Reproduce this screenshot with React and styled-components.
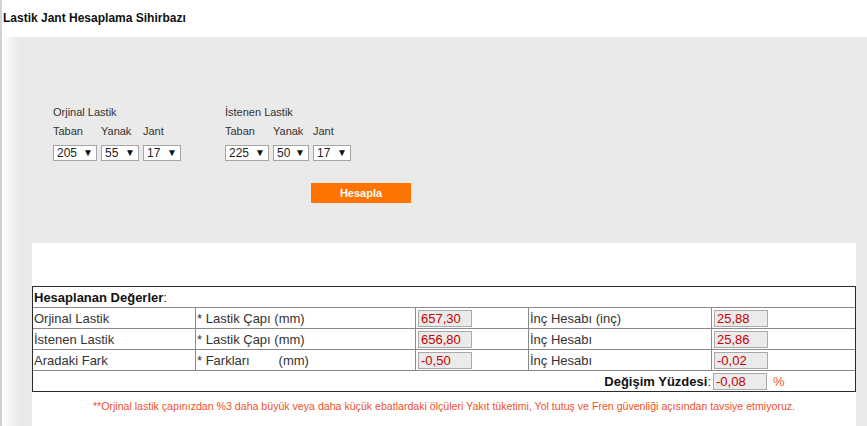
import React from "react";
import styled, { createGlobalStyle } from "styled-components";

const GlobalStyle = createGlobalStyle`
  html, body {
    margin: 0;
    padding: 0;
    background: #ffffff;
    overflow: hidden;
  }
  body {
    font-family: "Liberation Sans", Arial, sans-serif;
    color: #222;
  }
`;

const Frame = styled.div`
  display: flex;
  min-height: 100vh;
`;

const LeftRule = styled.div`
  width: 2px;
  background: #d2d2d2;
`;

const Main = styled.div`
  flex: 1;
  display: flex;
  flex-direction: column;
`;

const Title = styled.h1`
  margin: 0;
  height: 37px;
  box-sizing: border-box;
  padding: 11px 0 0 1px;
  font-size: 12px;
  line-height: 14px;
  font-weight: bold;
  color: #111;
`;

const Panel = styled.div`
  flex: 1;
  display: flex;
  flex-direction: column;
  background: linear-gradient(to right, #ffffff 0, #f1f1f1 10px, #eaeaea 18px);
`;

const Form = styled.div`
  padding: 69px 0 40px 51px;
  display: flex;
  flex-direction: column;
`;

const Groups = styled.div`
  display: flex;
  gap: 44px;
`;

const Group = styled.div`
  display: flex;
  flex-direction: column;
`;

const GroupTitle = styled.div`
  font-size: 11px;
  line-height: 13px;
  color: #333;
  margin-bottom: 6px;
`;

const FieldGrid = styled.div`
  display: grid;
  grid-template-columns: ${({ cols }) => cols};
  column-gap: ${({ gap }) => gap}px;
  row-gap: 7px;
`;

const FieldLabel = styled.div`
  font-size: 11px;
  line-height: 13px;
  color: #333;
`;

const SelectBox = styled.div`
  height: 16px;
  box-sizing: border-box;
  border: 1px solid #a5a5a5;
  background: #fff;
  display: flex;
  align-items: center;
  justify-content: space-between;
  padding: 0 3px 0 3px;
  font-size: 12px;
  color: #222;
`;

const Arrow = styled.span`
  font-size: 10px;
  line-height: 10px;
  color: #111;
`;

const Button = styled.button`
  margin: 22px 0 0 258px;
  width: 100px;
  height: 20px;
  border: none;
  background: #ff7300;
  color: #fff;
  font-family: "Liberation Sans", Arial, sans-serif;
  font-size: 11px;
  font-weight: bold;
  padding: 0;
`;

const Card = styled.div`
  flex: 1;
  margin: 0 11px 0 30px;
  background: #ffffff;
  padding-top: 43px;
`;

const Table = styled.table`
  width: 100%;
  border-collapse: separate;
  border-spacing: 0;
  border: 1px solid #2a2a2a;
  table-layout: fixed;
  font-size: 13px;
  color: #333;
`;

const Cell = styled.td`
  height: 20px;
  padding: 0 0 0 ${({ pad }) => pad ?? 0}px;
  border-top: ${({ noTop }) => (noTop ? "none" : "1px solid #8a8a8a")};
  border-left: ${({ noLeft }) => (noLeft ? "none" : "1px solid #8a8a8a")};
  text-align: ${({ right }) => (right ? "right" : "left")};
  white-space: pre;
  vertical-align: middle;
  line-height: 15px;
`;

const Strong = styled.b`
  color: #111;
`;

const ValueBox = styled.span`
  display: inline-block;
  vertical-align: middle;
  width: 54px;
  height: 17px;
  box-sizing: border-box;
  border: 1px solid #a9a9a9;
  background: #ebebeb;
  color: #c40000;
  font-size: 13px;
  line-height: 15px;
  padding-left: 2px;
`;

const Percent = styled.span`
  color: #f0552a;
  margin-left: 6px;
  vertical-align: middle;
`;

const Note = styled.p`
  margin: 8px 0 0;
  text-align: center;
  font-size: 10.6px;
  line-height: 12px;
  color: #f0502a;
`;

const Select = ({ value, width }) => (
  <SelectBox style={{ width }}>
    <span>{value}</span>
    <Arrow>▼</Arrow>
  </SelectBox>
);

const TireGroup = ({ title, cols, gap, values }) => (
  <Group>
    <GroupTitle>{title}</GroupTitle>
    <FieldGrid cols={cols.map((c) => c + "px").join(" ")} gap={gap}>
      <FieldLabel>Taban</FieldLabel>
      <FieldLabel>Yanak</FieldLabel>
      <FieldLabel>Jant</FieldLabel>
      {values.map((v, i) => (
        <Select key={i} value={v} width={cols[i]} />
      ))}
    </FieldGrid>
  </Group>
);

const rows = [
  ["Orjinal Lastik", "* Lastik Çapı (mm)", "657,30", "İnç Hesabı (inç)", "25,88"],
  ["İstenen Lastik", "* Lastik Çapı (mm)", "656,80", "İnç Hesabı", "25,86"],
  ["Aradaki Fark", "* Farkları        (mm)", "-0,50", "İnç Hesabı", "-0,02"],
];

const App = () => (
  <>
    <GlobalStyle />
    <Frame>
      <LeftRule />
      <Main>
        <Title>Lastik Jant Hesaplama Sihirbazı</Title>
        <Panel>
          <Form>
            <Groups>
              <TireGroup
                title="Orjinal Lastik"
                cols={[44, 38, 38]}
                gap={4}
                values={["205", "55", "17"]}
              />
              <TireGroup
                title="İstenen Lastik"
                cols={[44, 36, 38]}
                gap={4}
                values={["225", "50", "17"]}
              />
            </Groups>
            <Button>Hesapla</Button>
          </Form>
          <Card>
            <Table>
              <colgroup>
                <col style={{ width: 162 }} />
                <col style={{ width: 220 }} />
                <col style={{ width: 113 }} />
                <col style={{ width: 183 }} />
                <col />
              </colgroup>
              <tbody>
                <tr>
                  <Cell colSpan={5} noTop noLeft pad={1}>
                    <Strong>Hesaplanan Değerler</Strong>:
                  </Cell>
                </tr>
                {rows.map((r) => (
                  <tr key={r[0]}>
                    <Cell noLeft pad={1}>{r[0]}</Cell>
                    <Cell pad={1}>{r[1]}</Cell>
                    <Cell pad={2}>
                      <ValueBox>{r[2]}</ValueBox>
                    </Cell>
                    <Cell pad={1}>{r[3]}</Cell>
                    <Cell pad={2}>
                      <ValueBox>{r[4]}</ValueBox>
                    </Cell>
                  </tr>
                ))}
                <tr>
                  <Cell colSpan={4} noLeft right>
                    <Strong>Değişim Yüzdesi</Strong>:
                  </Cell>
                  <Cell noLeft pad={2}>
                    <ValueBox>-0,08</ValueBox>
                    <Percent>%</Percent>
                  </Cell>
                </tr>
              </tbody>
            </Table>
            <Note>
              **Orjinal lastik çapınızdan %3 daha büyük veya daha küçük ebatlardaki ölçüleri Yakıt tüketimi, Yol tutuş ve Fren güvenliği açısından tavsiye etmiyoruz.
            </Note>
          </Card>
        </Panel>
      </Main>
    </Frame>
  </>
);

export default App;
